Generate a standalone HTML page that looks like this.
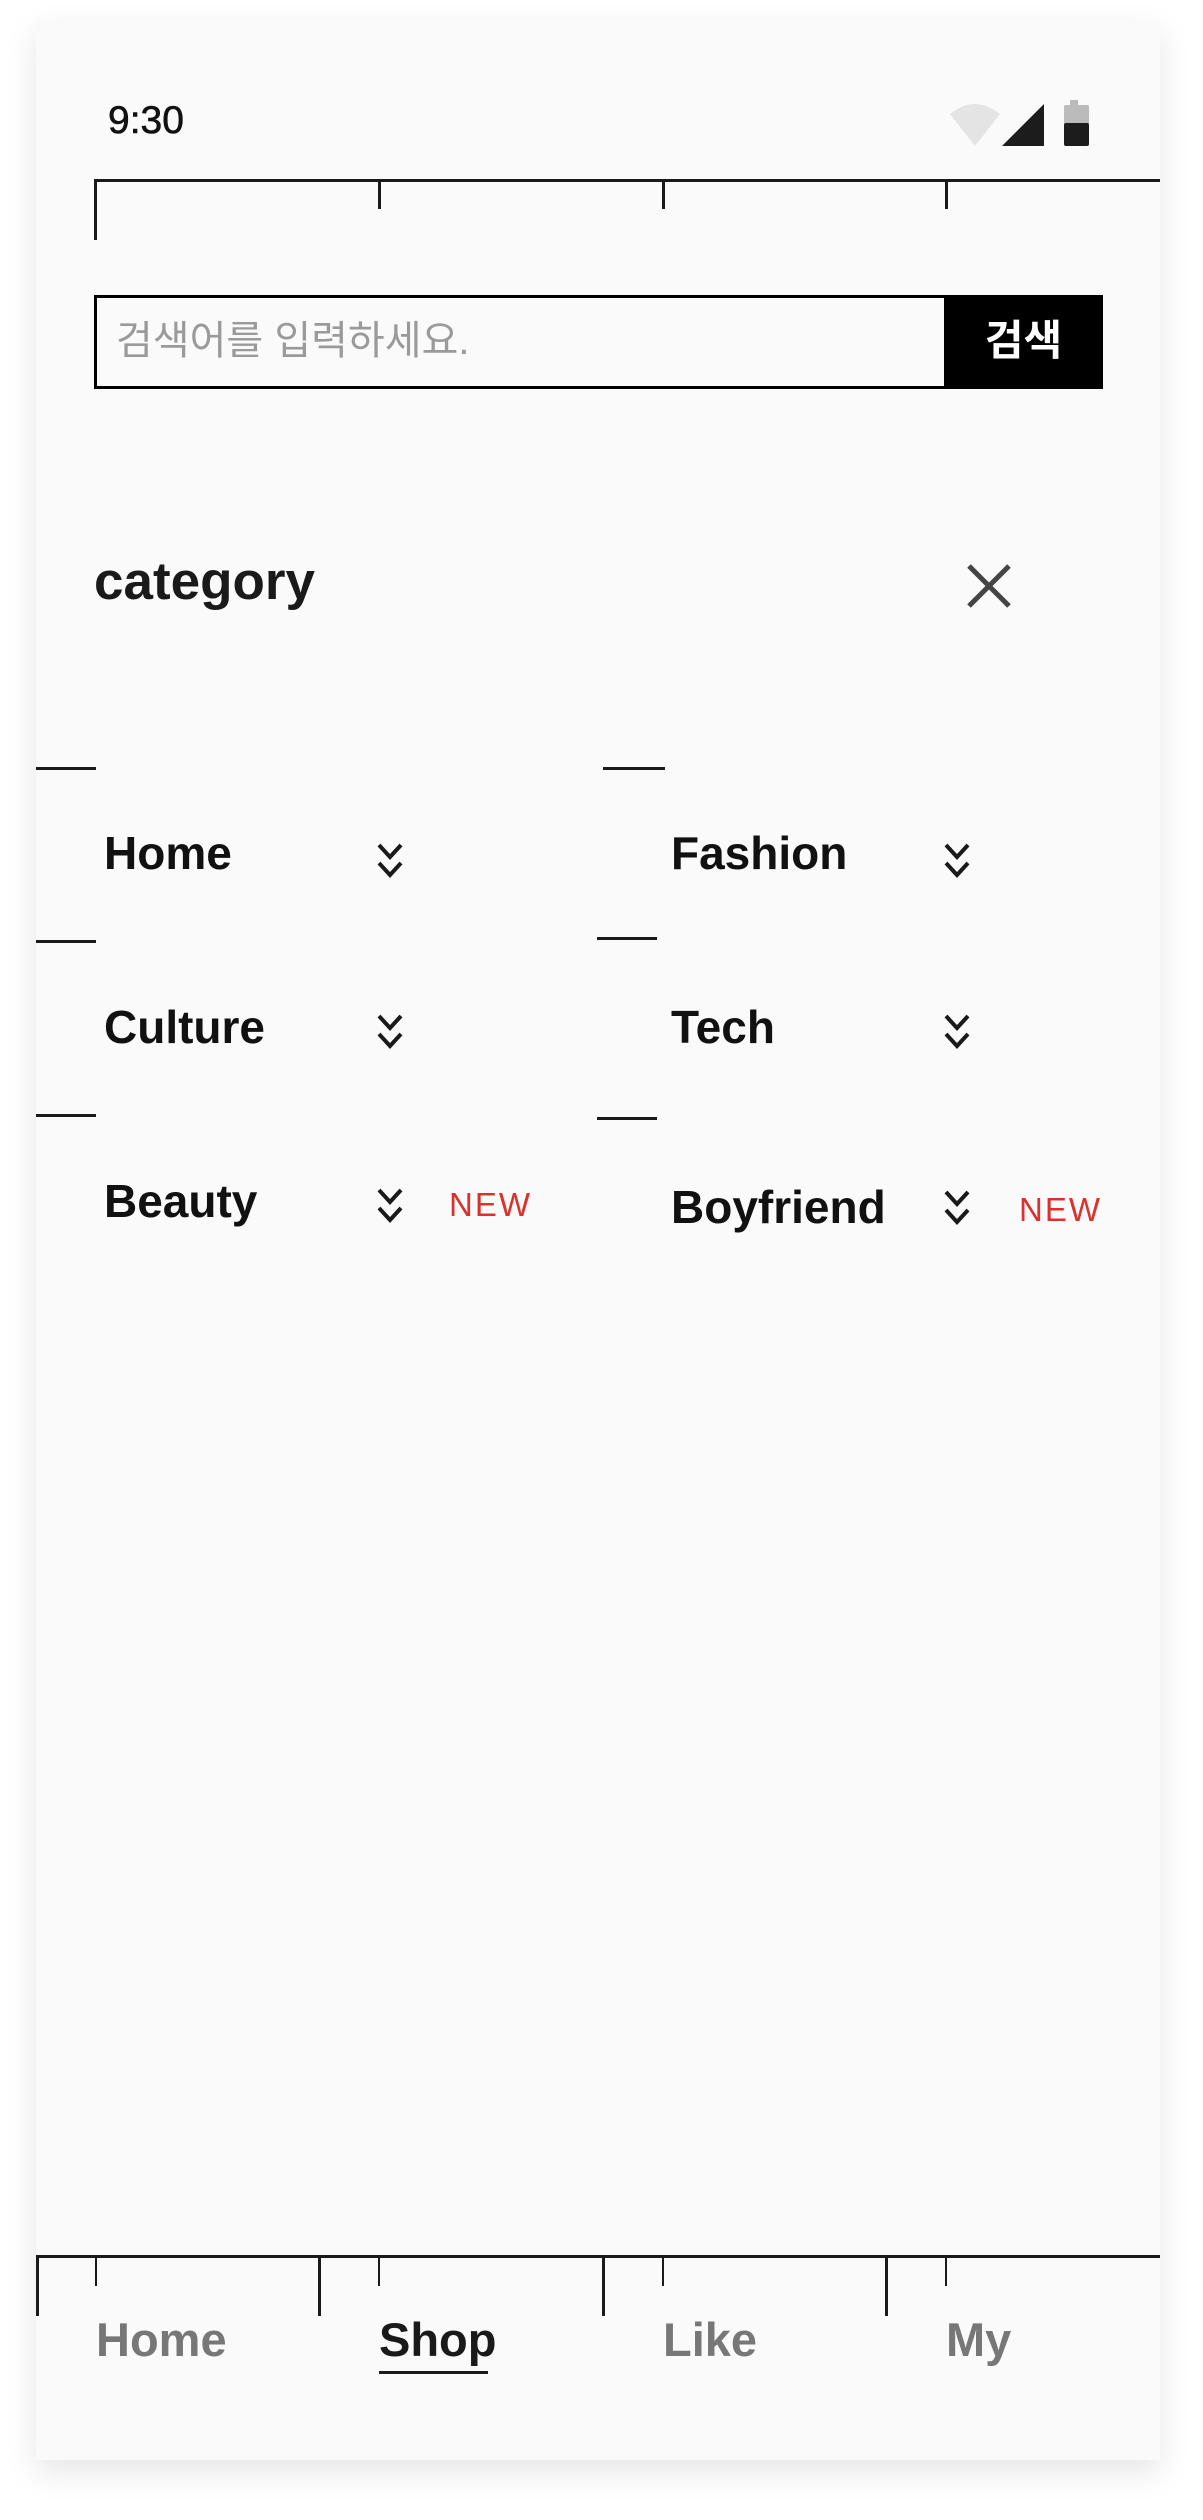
<!DOCTYPE html>
<html><head><meta charset="utf-8"><style>
*{margin:0;padding:0;box-sizing:border-box}
body{width:1203px;height:2520px;background:#fff;position:relative;overflow:hidden;font-family:"Liberation Sans","Noto Sans CJK KR",sans-serif}
.card{position:absolute;left:36px;top:20px;width:1124px;height:2440px;background:#fafafa;box-shadow:0 12px 30px rgba(0,0,0,0.10)}
.a{position:absolute}
.h{position:absolute;background:#1a1a1a}
.t{position:absolute;white-space:nowrap;line-height:1}
.cat{font-size:46px;font-weight:bold;color:#111}
.new{font-size:33px;color:#d8322e;letter-spacing:2px}
.nav{font-size:47px;font-weight:600;color:#777}
</style></head><body>
<div class="card"></div>
<div class="t" style="left:108px;top:101px;font-size:39px;color:#111;font-weight:500;-webkit-text-stroke:0.6px #111">9:30</div>
<svg class="a" style="left:948px;top:100px" width="145" height="48" viewBox="0 0 145 48">
<path d="M2 14 Q27 -6 52 14 L27 46 Z" fill="#e4e4e4"/>
<path d="M54 46 L96 4 L96 46 Z" fill="#1c1c1c"/>
<rect x="122" y="0" width="8" height="5" fill="#bbb"/>
<rect x="116" y="5" width="25" height="20" rx="2" fill="#bbb"/>
<rect x="116" y="23" width="25" height="23" rx="2" fill="#1c1c1c"/>
</svg>
<!-- top lines -->
<div class="h" style="left:94px;top:179px;width:1066px;height:3px"></div>
<div class="h" style="left:94px;top:179px;width:3px;height:61px"></div>
<div class="h" style="left:378px;top:179px;width:3px;height:30px"></div>
<div class="h" style="left:662px;top:179px;width:3px;height:30px"></div>
<div class="h" style="left:945px;top:179px;width:3px;height:30px"></div>
<!-- search -->
<div class="a" style="left:94px;top:295px;width:1009px;height:94px;border:3px solid #000;background:#fafafa"></div>
<div class="a" style="left:944px;top:295px;width:159px;height:94px;background:#000"></div>
<div class="t" style="left:116px;top:321px;font-size:40px;color:#9a9a9a">검색어를 입력하세요.</div>
<div class="t" style="left:944px;top:320px;width:159px;text-align:center;font-size:42px;font-weight:bold;color:#fff">검색</div>
<!-- category -->
<div class="t" style="left:94px;top:555px;font-size:53px;font-weight:bold;color:#1a1a1a">category</div>
<svg class="a" style="left:966px;top:563px" width="46" height="46" viewBox="0 0 46 46"><path d="M3 3 L43 43 M43 3 L3 43" stroke="#444" stroke-width="5"/></svg>
<!-- dashes -->
<div class="h" style="left:36px;top:767px;width:60px;height:3px"></div>
<div class="h" style="left:603px;top:767px;width:62px;height:3px"></div>
<div class="h" style="left:36px;top:940px;width:60px;height:3px"></div>
<div class="h" style="left:597px;top:937px;width:60px;height:3px"></div>
<div class="h" style="left:36px;top:1114px;width:60px;height:3px"></div>
<div class="h" style="left:597px;top:1117px;width:60px;height:3px"></div>
<!-- items -->
<div class="t cat" style="left:104px;top:830px">Home</div>
<div class="t cat" style="left:104px;top:1004px">Culture</div>
<div class="t cat" style="left:104px;top:1178px">Beauty</div>
<div class="t cat" style="left:671px;top:830px">Fashion</div>
<div class="t cat" style="left:671px;top:1004px">Tech</div>
<div class="t cat" style="left:671px;top:1184px">Boyfriend</div>
<svg width="0" height="0" style="position:absolute"><defs><g id="ch"><path d="M2 2 L13 14 L24 2 M2 20 L13 32 L24 20" stroke="#1a1a1a" stroke-width="4" fill="none"/></g></defs></svg>
<svg class="a" style="left:377px;top:843px" width="26" height="35"><use href="#ch"/></svg>
<svg class="a" style="left:377px;top:1014px" width="26" height="35"><use href="#ch"/></svg>
<svg class="a" style="left:377px;top:1188px" width="26" height="35"><use href="#ch"/></svg>
<svg class="a" style="left:944px;top:843px" width="26" height="35"><use href="#ch"/></svg>
<svg class="a" style="left:944px;top:1014px" width="26" height="35"><use href="#ch"/></svg>
<svg class="a" style="left:944px;top:1190px" width="26" height="35"><use href="#ch"/></svg>
<div class="t new" style="left:449px;top:1188px">NEW</div>
<div class="t new" style="left:1019px;top:1193px">NEW</div>
<!-- bottom nav -->
<div class="h" style="left:36px;top:2255px;width:1124px;height:3px"></div>
<div class="h" style="left:36px;top:2255px;width:3px;height:61px"></div>
<div class="h" style="left:318px;top:2255px;width:3px;height:61px"></div>
<div class="h" style="left:602px;top:2255px;width:3px;height:61px"></div>
<div class="h" style="left:885px;top:2255px;width:3px;height:61px"></div>
<div class="h" style="left:95px;top:2255px;width:2px;height:31px"></div>
<div class="h" style="left:378px;top:2255px;width:2px;height:31px"></div>
<div class="h" style="left:662px;top:2255px;width:2px;height:31px"></div>
<div class="h" style="left:945px;top:2255px;width:2px;height:31px"></div>
<div class="t nav" style="left:96px;top:2316px">Home</div>
<div class="t nav" style="left:379px;top:2316px;color:#1a1a1a">Shop</div>
<div class="h" style="left:379px;top:2371px;width:109px;height:3px"></div>
<div class="t nav" style="left:663px;top:2316px">Like</div>
<div class="t nav" style="left:946px;top:2316px">My</div>
</body></html>
